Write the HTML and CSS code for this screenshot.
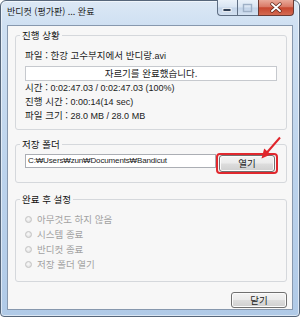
FILE: index.html
```html
<!DOCTYPE html>
<html lang="ko">
<head>
<meta charset="utf-8">
<title>반디컷 (평가판) ... 완료</title>
<link rel="stylesheet" href="styles.css">
</head>
<body>
<div class="window">
  <div class="titlebar">
    <span class="title">반디컷 (평가판) ... 완료</span>
    <div class="caption">
      <span class="cap cap-min"><svg width="20" height="16" viewBox="0 0 20 16"><rect x="6" y="8.5" width="8" height="3" fill="#2f3f55" stroke="#ffffff" stroke-width="0.8"/></svg></span>
      <span class="cap cap-max"><svg width="21" height="16" viewBox="0 0 21 16"><rect x="6.5" y="4.5" width="8" height="7" fill="none" stroke="#9eb0c6" stroke-width="1.4"/></svg></span>
      <span class="cap cap-close"><svg width="36" height="16" viewBox="0 0 36 16"><path d="M14 4 L22 11 M22 4 L14 11" stroke="#5a2418" stroke-width="3.4" stroke-linecap="round"/><path d="M14 4 L22 11 M22 4 L14 11" stroke="#ffffff" stroke-width="1.9" stroke-linecap="round"/></svg></span>
    </div>
  </div>
  <div class="client">
    <fieldset class="group g1">
      <legend>진행 상황</legend>
      <div class="gbody b1">
        <div class="line file">파일 : 한강 고수부지에서 반디랑<span class="num">.avi</span></div>
        <div class="status">자르기를 완료했습니다.</div>
        <div class="line">시간 : <span class="num">0:02:47.03 / 0:02:47.03 (100%)</span></div>
        <div class="line">진행 시간 : <span class="num">0:00:14(14 sec)</span></div>
        <div class="line">파일 크기 : <span class="num">28.0 MB / 28.0 MB</span></div>
      </div>
    </fieldset>
    <fieldset class="group g2">
      <legend>저장 폴더</legend>
      <div class="gbody b2">
        <div class="path">C:₩Users₩zun₩Documents₩Bandicut</div>
        <div class="hl"><span class="btn open">열기</span></div>
      </div>
    </fieldset>
    <fieldset class="group g3">
      <legend>완료 후 설정</legend>
      <div class="gbody b3">
        <div class="radio"><span class="dot"></span>아무것도 하지 않음</div>
        <div class="radio"><span class="dot"></span>시스템 종료</div>
        <div class="radio"><span class="dot"></span>반디컷 종료</div>
        <div class="radio"><span class="dot"></span>저장 폴더 열기</div>
      </div>
    </fieldset>
    <div class="footer"><span class="btn close-btn">닫기</span></div>
  </div>
  <svg class="arrow" width="300" height="317" viewBox="0 0 300 317">
    <line x1="280" y1="137.5" x2="267" y2="152.5" stroke="#e0262c" stroke-width="2"/>
    <polygon points="261.5,158.5 270.8,154.6 264.2,148.6" fill="#e0262c"/>
  </svg>
</div>
</body>
</html>
```

FILE: styles.css
```css
* { box-sizing: border-box; }
html, body { margin: 0; padding: 0; }
body {
  width: 300px;
  height: 317px;
  overflow: hidden;
  background: #ffffff;
  font-family: "Noto Sans CJK KR", "Noto Sans", sans-serif;
  font-size: 9.5px;
  color: #1b1b1b;
}
.window {
  position: relative;
  width: 300px;
  height: 317px;
  display: flex;
  flex-direction: column;
  border: 1px solid #56667a;
  border-radius: 6px 6px 4px 4px;
  background: linear-gradient(180deg, #dce8f5 0px, #cfe0f2 24px, #bcd3ec 55%, #b0cae7 100%);
  box-shadow: inset 0 0 0 1px rgba(255, 255, 255, 0.55);
}
.titlebar {
  height: 24px;
  display: flex;
  align-items: flex-start;
  padding-left: 6px;
}
.title {
  line-height: 22px;
  font-size: 9px;
  color: #1e1e1e;
}
.caption {
  margin-left: auto;
  margin-right: 5px;
  margin-top: -1px;
  height: 16px;
  display: flex;
}
.cap {
  display: block;
  height: 16px;
  border: 1px solid #5f6f84;
  border-top: none;
}
.cap svg { display: block; margin-left: -1px; }
.cap-min {
  width: 20px;
  border-radius: 0 0 0 4px;
  border-right: none;
  background: linear-gradient(180deg, #eaf1f9 0%, #d8e4f2 48%, #c2d3e8 52%, #d3e1f1 100%);
}
.cap-max {
  width: 21px;
  border-right: none;
  background: linear-gradient(180deg, #eaf1f9 0%, #d8e4f2 48%, #c2d3e8 52%, #d3e1f1 100%);
}
.cap-close {
  width: 36px;
  border-radius: 0 0 4px 0;
  border-color: #6b3a33;
  background: linear-gradient(180deg, #e9a999 0%, #d97a67 45%, #c7472f 52%, #d36a52 100%);
}
.client {
  flex: 1;
  margin: 0 6px 6px 6px;
  border: 1px solid #8798ae;
  background: #f7f7f7;
  padding: 2px 5px 0 7px;
  display: flex;
  flex-direction: column;
}
.group {
  margin: 0;
  padding: 0;
  min-width: 0;
  border: 1px solid #d5d8dc;
  border-radius: 3px;
}
.group legend {
  margin-left: 4px;
  padding: 0 2px;
  line-height: 14px;
  color: #111111;
}
.g2 { margin-top: 7px; }
.g3 { margin-top: 9px; }
.gbody { padding: 0 9px; }
.b1 { padding-top: 6px; padding-bottom: 6px; }
.b2 { padding-top: 2px; padding-bottom: 8px; display: flex; align-items: flex-start; }
.b3 { padding-top: 6px; padding-bottom: 9px; }
.line { line-height: 13px; white-space: nowrap; }
.line.file { line-height: 14px; }
.num {
  font-family: "Liberation Sans", "DejaVu Sans", sans-serif;
  font-size: 9px;
}
.status {
  margin-top: 3px;
  height: 15px;
  border: 1px solid #c6c9ce;
  background: #ffffff;
  text-align: center;
  line-height: 13px;
  color: #222222;
}
.path {
  flex-shrink: 0;
  width: 191px;
  height: 14px;
  margin-top: 1px;
  border: 1px solid #abaeb4;
  background: #ffffff;
  padding-left: 2px;
  font-family: "Liberation Sans", "Noto Sans CJK KR", sans-serif;
  font-size: 8px;
  letter-spacing: -0.15px;
  line-height: 12px;
  color: #1b1b1b;
  white-space: nowrap;
  overflow: hidden;
}
.hl {
  flex-shrink: 0;
  height: 21px;
  border: 2px solid #e0282e;
  border-radius: 4px;
  padding: 0 1px;
  margin-right: -1px;
}
.btn {
  display: block;
  width: 56px;
  text-align: center;
  border: 1px solid #707070;
  border-radius: 3px;
  background: linear-gradient(180deg, #f3f3f3 0%, #ebebeb 48%, #dddddd 52%, #cfcfcf 100%);
  box-shadow: inset 0 0 0 1px #fbfbfb;
  color: #1b1b1b;
}
.open {
  height: 17px;
  line-height: 15px;
}
.radio {
  display: flex;
  align-items: center;
  line-height: 15px;
  height: 15px;
  color: #a2a2a2;
}
.dot {
  width: 7px;
  height: 7px;
  border-radius: 50%;
  border: 1px solid #c4c4c4;
  background: radial-gradient(circle at 45% 40%, #fbfbfb 0%, #e2e2e2 70%, #d6d6d6 100%);
  margin-right: 5px;
}
.footer {
  margin-top: 10px;
  display: flex;
  justify-content: flex-end;
}
.close-btn {
  height: 16px;
  line-height: 14px;
}
.arrow {
  position: absolute;
  left: -1px;
  top: -1px;
  pointer-events: none;
}
```
